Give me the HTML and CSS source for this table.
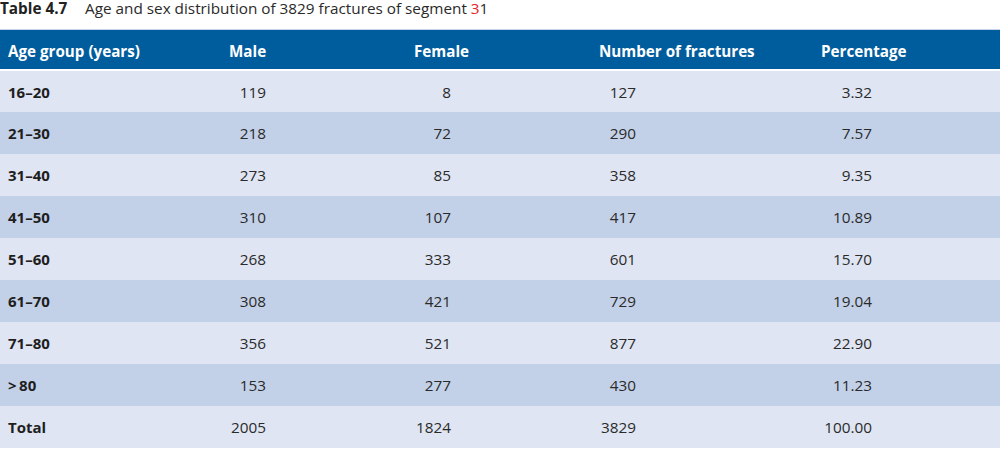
FILE: index.html
```html
<!DOCTYPE html>
<html lang="en">
<head>
<meta charset="utf-8">
<title>Table 4.7</title>
<link rel="stylesheet" href="styles.css">
</head>
<body>
<div class="caption">
  <span class="caption-label">Table 4.7</span>
  <span class="caption-text">Age and sex distribution of 3829 fractures of segment <span class="red">3</span>1</span>
</div>
<div class="table">
  <div class="row head">
    <div class="cell">Age group (years)</div>
    <div class="cell">Male</div>
    <div class="cell">Female</div>
    <div class="cell">Number of fractures</div>
    <div class="cell">Percentage</div>
  </div>
  <div class="row light first">
    <div class="cell label">16–20</div>
    <div class="cell"><span class="num">119</span></div>
    <div class="cell"><span class="num">8</span></div>
    <div class="cell"><span class="num">127</span></div>
    <div class="cell"><span class="num pct">3.32</span></div>
  </div>
  <div class="row dark">
    <div class="cell label">21–30</div>
    <div class="cell"><span class="num">218</span></div>
    <div class="cell"><span class="num">72</span></div>
    <div class="cell"><span class="num">290</span></div>
    <div class="cell"><span class="num pct">7.57</span></div>
  </div>
  <div class="row light">
    <div class="cell label">31–40</div>
    <div class="cell"><span class="num">273</span></div>
    <div class="cell"><span class="num">85</span></div>
    <div class="cell"><span class="num">358</span></div>
    <div class="cell"><span class="num pct">9.35</span></div>
  </div>
  <div class="row dark">
    <div class="cell label">41–50</div>
    <div class="cell"><span class="num">310</span></div>
    <div class="cell"><span class="num">107</span></div>
    <div class="cell"><span class="num">417</span></div>
    <div class="cell"><span class="num pct">10.89</span></div>
  </div>
  <div class="row light">
    <div class="cell label">51–60</div>
    <div class="cell"><span class="num">268</span></div>
    <div class="cell"><span class="num">333</span></div>
    <div class="cell"><span class="num">601</span></div>
    <div class="cell"><span class="num pct">15.70</span></div>
  </div>
  <div class="row dark">
    <div class="cell label">61–70</div>
    <div class="cell"><span class="num">308</span></div>
    <div class="cell"><span class="num">421</span></div>
    <div class="cell"><span class="num">729</span></div>
    <div class="cell"><span class="num pct">19.04</span></div>
  </div>
  <div class="row light">
    <div class="cell label">71–80</div>
    <div class="cell"><span class="num">356</span></div>
    <div class="cell"><span class="num">521</span></div>
    <div class="cell"><span class="num">877</span></div>
    <div class="cell"><span class="num pct">22.90</span></div>
  </div>
  <div class="row dark">
    <div class="cell label">&gt;&#8201;80</div>
    <div class="cell"><span class="num">153</span></div>
    <div class="cell"><span class="num">277</span></div>
    <div class="cell"><span class="num">430</span></div>
    <div class="cell"><span class="num pct">11.23</span></div>
  </div>
  <div class="row light">
    <div class="cell label">Total</div>
    <div class="cell"><span class="num">2005</span></div>
    <div class="cell"><span class="num">1824</span></div>
    <div class="cell"><span class="num">3829</span></div>
    <div class="cell"><span class="num pct">100.00</span></div>
  </div>
</div>
</body>
</html>
```
FILE: styles.css
```css
html, body {
  margin: 0;
  padding: 0;
  background: #ffffff;
}
body {
  font-family: "Open Sans", "Noto Sans", "DejaVu Sans", sans-serif;
  color: #222222;
  width: 1000px;
}
.caption {
  height: 29px;
  display: flex;
  align-items: flex-start;
  font-size: 15.3px;
  line-height: 16px;
  white-space: nowrap;
}
.caption-label {
  font-weight: 700;
  width: 85px;
  flex: none;
}
.caption-text {
  font-weight: 400;
  color: #2a2a2a;
}
.red {
  color: #e52528;
}
.table {
  border-top: 1px solid #c9d5ea;
}
.row {
  display: grid;
  grid-template-columns: 221px 185px 185px 222px 1fr;
  align-items: center;
  height: 42px;
}
.cell {
  padding-left: 8px;
  white-space: nowrap;
}
.head {
  background: #005d9d;
  color: #ffffff;
  font-weight: 700;
  font-size: 15.2px;
  padding-top: 2px;
  box-sizing: border-box;
  border-bottom: 2px solid #ffffff;
  height: 41px;
}
.first {
  height: 41px;
}
.light {
  background: #dfe5f2;
}
.dark {
  background: #c3d1e8;
}
.label {
  font-weight: 700;
  font-size: 15px;
  color: #1e1e1e;
}
.num {
  display: inline-block;
  width: 37px;
  text-align: right;
  font-size: 15.3px;
  color: #2a2a2a;
}
.num.pct {
  width: 51px;
}
```
